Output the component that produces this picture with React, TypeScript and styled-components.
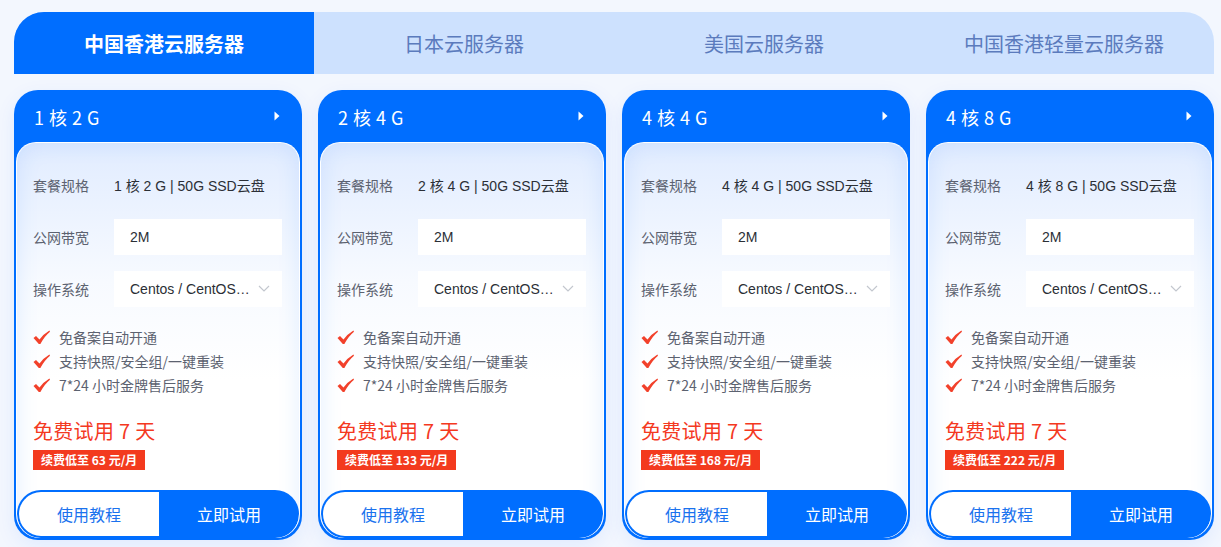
import React from 'react'
import styled, { createGlobalStyle } from 'styled-components'

const GlobalStyle = createGlobalStyle`
  body {
    margin: 0;
    background: #f3f7fe;
    font-family: 'Noto Sans CJK SC', 'Noto Sans', sans-serif;
  }
`

const tabs = ['中国香港云服务器', '日本云服务器', '美国云服务器', '中国香港轻量云服务器']

const plans = [
  { core: '1', mem: '2', price: '63' },
  { core: '2', mem: '4', price: '133' },
  { core: '4', mem: '4', price: '168' },
  { core: '4', mem: '8', price: '222' },
]

const features = ['免备案自动开通', '支持快照/安全组/一键重装', '7*24 小时金牌售后服务']

const CheckIcon = () => (
  <svg width='17' height='15' viewBox='0 0 17 15'>
    <path
      d='M0.5 8 L3 6 L6.5 9.6 Q10 4.5 16.4 0.6 L17 1.8 Q11.4 6.4 7.4 14 L5.8 14 Z'
      fill='#f2412b'
    />
  </svg>
)

const ArrowIcon = () => (
  <svg width='6' height='10' viewBox='0 0 6 10'>
    <path d='M0.5 0.5 L5.5 5 L0.5 9.5 Z' fill='#fff' />
  </svg>
)

const Chevron = () => (
  <svg width='12' height='8' viewBox='0 0 12 8'>
    <path d='M1 1 L6 6 L11 1' fill='none' stroke='#c3c7ce' strokeWidth='1.2' />
  </svg>
)

const App = () => (
  <Page>
    <GlobalStyle />
    <TabBar>
      {tabs.map((t, i) => (
        <Tab key={t} $active={i === 0}>
          {t}
        </Tab>
      ))}
    </TabBar>
    <Cards>
      {plans.map((p) => (
        <Card key={p.price}>
          <CardHead>
            <HeadTitle>
              {p.core} 核 {p.mem} G
            </HeadTitle>
            <ArrowIcon />
          </CardHead>
          <Panel>
            <Body>
              <SpecRow>
                <Label>套餐规格</Label>
                <SpecValue>
                  {p.core} 核 {p.mem} G | 50G SSD云盘
                </SpecValue>
              </SpecRow>
              <SpecRow>
                <Label>公网带宽</Label>
                <Field>2M</Field>
              </SpecRow>
              <SpecRow>
                <Label>操作系统</Label>
                <Field>
                  <span>Centos / CentOS…</span>
                  <Chevron />
                </Field>
              </SpecRow>
              <FeatureList>
                {features.map((f) => (
                  <Feature key={f}>
                    <CheckIcon />
                    <span>{f}</span>
                  </Feature>
                ))}
              </FeatureList>
              <Trial>免费试用 7 天</Trial>
              <RenewTag>续费低至 {p.price} 元/月</RenewTag>
            </Body>
            <ButtonRow>
              <GuideButton>使用教程</GuideButton>
              <TryButton>立即试用</TryButton>
            </ButtonRow>
          </Panel>
        </Card>
      ))}
    </Cards>
  </Page>
)

const Page = styled.div`
  width: 1200px;
  padding: 12px 7px 7px 14px;
`

const TabBar = styled.div`
  display: grid;
  grid-template-columns: repeat(4, 1fr);
  height: 62px;
  background: #cde1fe;
  border-radius: 30px 30px 0 0;
  overflow: hidden;
`

const Tab = styled.div<{ $active?: boolean }>`
  display: flex;
  align-items: center;
  justify-content: center;
  font-size: 20px;
  font-weight: ${(p) => (p.$active ? 700 : 400)};
  color: ${(p) => (p.$active ? '#fff' : '#5b7bbd')};
  background: ${(p) => (p.$active ? '#006eff' : 'transparent')};
`

const Cards = styled.div`
  display: grid;
  grid-template-columns: repeat(4, 288px);
  gap: 16px;
  margin-top: 16px;
`

const Card = styled.div`
  height: 450px;
  display: flex;
  flex-direction: column;
  background: #006eff;
  border-radius: 24px;
  padding: 0 2px 2px;
  box-sizing: border-box;
  box-shadow: 0 6px 20px rgba(0, 90, 255, 0.08);
`

const CardHead = styled.div`
  height: 52px;
  flex-shrink: 0;
  display: flex;
  align-items: center;
  justify-content: space-between;
  padding: 0 20px 0 18px;
  color: #fff;
`

const HeadTitle = styled.div`
  font-family: 'Noto Sans CJK SC', sans-serif;
  font-size: 18px;
  letter-spacing: 0.5px;
  padding-top: 1px;
`

const Panel = styled.div`
  flex: 1;
  display: flex;
  flex-direction: column;
  border: 1.5px solid #ffffff;
  border-bottom: none;
  border-radius: 20px 20px 24px 24px;
  background: linear-gradient(180deg, #e1ecff 0%, #f7faff 35%, #ffffff 60%);
  box-shadow: inset 0 0 22px rgba(40, 120, 255, 0.13);
  overflow: hidden;
`

const Body = styled.div`
  flex: 1;
  padding: 24px 17px 0 16px;
  display: flex;
  flex-direction: column;
`

const SpecRow = styled.div`
  display: flex;
  align-items: center;
  height: 36px;
  margin-bottom: 16px;
`

const Label = styled.div`
  width: 81px;
  flex-shrink: 0;
  font-size: 14px;
  color: #5c6270;
`

const SpecValue = styled.div`
  font-family: 'Liberation Sans', 'Noto Sans CJK SC', sans-serif;
  font-size: 14px;
  color: #2b2f36;
`

const Field = styled.div`
  flex: 1;
  height: 36px;
  display: flex;
  align-items: center;
  justify-content: space-between;
  padding: 0 12px 0 16px;
  background: #fff;
  font-family: 'Liberation Sans', 'Noto Sans CJK SC', sans-serif;
  font-size: 14px;
  color: #2b2f36;
`

const FeatureList = styled.div`
  display: flex;
  flex-direction: column;
  margin-top: 2px;
`

const Feature = styled.div`
  display: flex;
  align-items: center;
  gap: 9px;
  height: 24px;
  font-size: 14px;
  color: #5c6270;
`

const Trial = styled.div`
  margin-top: 20px;
  font-size: 20px;
  line-height: 28px;
  letter-spacing: 0.3px;
  color: #f4391f;
`

const RenewTag = styled.div`
  align-self: flex-start;
  margin-top: 5px;
  height: 20px;
  line-height: 20px;
  padding: 0 8px;
  background: #f33a1e;
  color: #fff;
  font-size: 12px;
  font-weight: 700;
`

const ButtonRow = styled.div`
  display: flex;
  height: 48px;
  flex-shrink: 0;
`

const GuideButton = styled.div`
  flex: 1;
  display: flex;
  align-items: center;
  justify-content: center;
  background: #fff;
  border: 2px solid #006eff;
  border-right: none;
  border-radius: 24px 0 0 24px;
  font-size: 16px;
  color: #1a72ee;
`

const TryButton = styled.div`
  flex: 1;
  display: flex;
  align-items: center;
  justify-content: center;
  background: #006eff;
  border-radius: 0 24px 24px 0;
  font-size: 16px;
  color: #fff;
`

export default App
